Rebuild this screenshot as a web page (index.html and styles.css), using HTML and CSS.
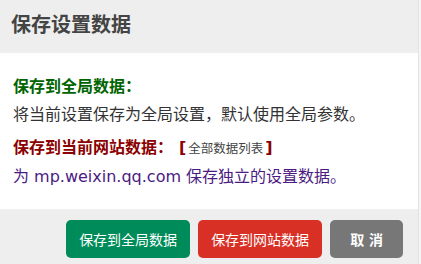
FILE: index.html
```html
<!DOCTYPE html>
<html lang="zh-CN">
<head>
    <meta charset="UTF-8">
    <meta name="viewport" content="width=device-width, initial-scale=1.0">
    <title>保存设置数据</title>
    <link rel="stylesheet" href="styles.css">
</head>
<body>

<div class="dialog">
    <div class="dialog-title">保存设置数据</div>
    <div class="dialog-body">
        <p class="opt-global">保存到全局数据<span class="colon">：</span></p>
        <p class="desc">将当前设置保存为全局设置，默认使用全局参数。</p>
        <p class="opt-site">保存到当前网站数据<span class="colon">：</span><span class="list-link">[<span class="list-text">全部数据列表</span>]</span></p>
        <p class="site-desc">为 mp.weixin.qq.com 保存独立的设置数据。</p>
    </div>
    <div class="dialog-foot">
        <button class="btn btn-global">保存到全局数据</button>
        <button class="btn btn-site">保存到网站数据</button>
        <button class="btn btn-cancel">取 消</button>
    </div>
</div>

</body>
</html>
```

FILE: styles.css
```css
body {
    margin: 0;
    background-color: #f6f6f6;
    font-family: "DejaVu Sans", "Noto Sans CJK SC", sans-serif;
}

.dialog {
    width: 418px;
    height: 264px;
    background-color: #eeeeee;
    border-right: 1px solid #e2e2e2;
}

.dialog-title {
    height: 53px;
    line-height: 50px;
    padding: 0 11px;
    font-size: 20px;
    font-weight: bold;
    color: #444;
}

.dialog-body {
    background-color: #fff;
    padding: 18px 13px;
}

.dialog-body p {
    margin: 0;
    font-size: 16px;
    line-height: 28px;
}

/* centred full-width colon, like the original font */
.colon {
    font-family: "Noto Sans CJK TC", sans-serif;
}

.opt-global {
    color: #006400;
    font-weight: bold;
}

.desc {
    color: #333;
}

.opt-site {
    margin-top: 3px !important;
    color: #8b0000;
    font-weight: bold;
}

.list-link {
    margin-left: 6px;
}

.list-text {
    font-size: 12.5px;
    font-weight: normal;
    color: #444;
    padding: 0 2px;
}

.site-desc {
    color: #4b1a82;
}

.dialog-foot {
    display: flex;
    justify-content: flex-end;
    gap: 8px;
    padding: 11px 15px;
}

.btn {
    height: 38px;
    padding: 0 13px;
    font-family: "DejaVu Sans", "Noto Sans CJK SC", sans-serif;
    font-size: 14px;
    color: #fff;
    border: none;
    border-radius: 5px;
    cursor: pointer;
}

.btn-global {
    background-color: #008c5a;
}

.btn-site {
    background-color: #d93025;
}

.btn-cancel {
    padding: 0 20px;
    background-color: #777;
    font-weight: bold;
}
```
